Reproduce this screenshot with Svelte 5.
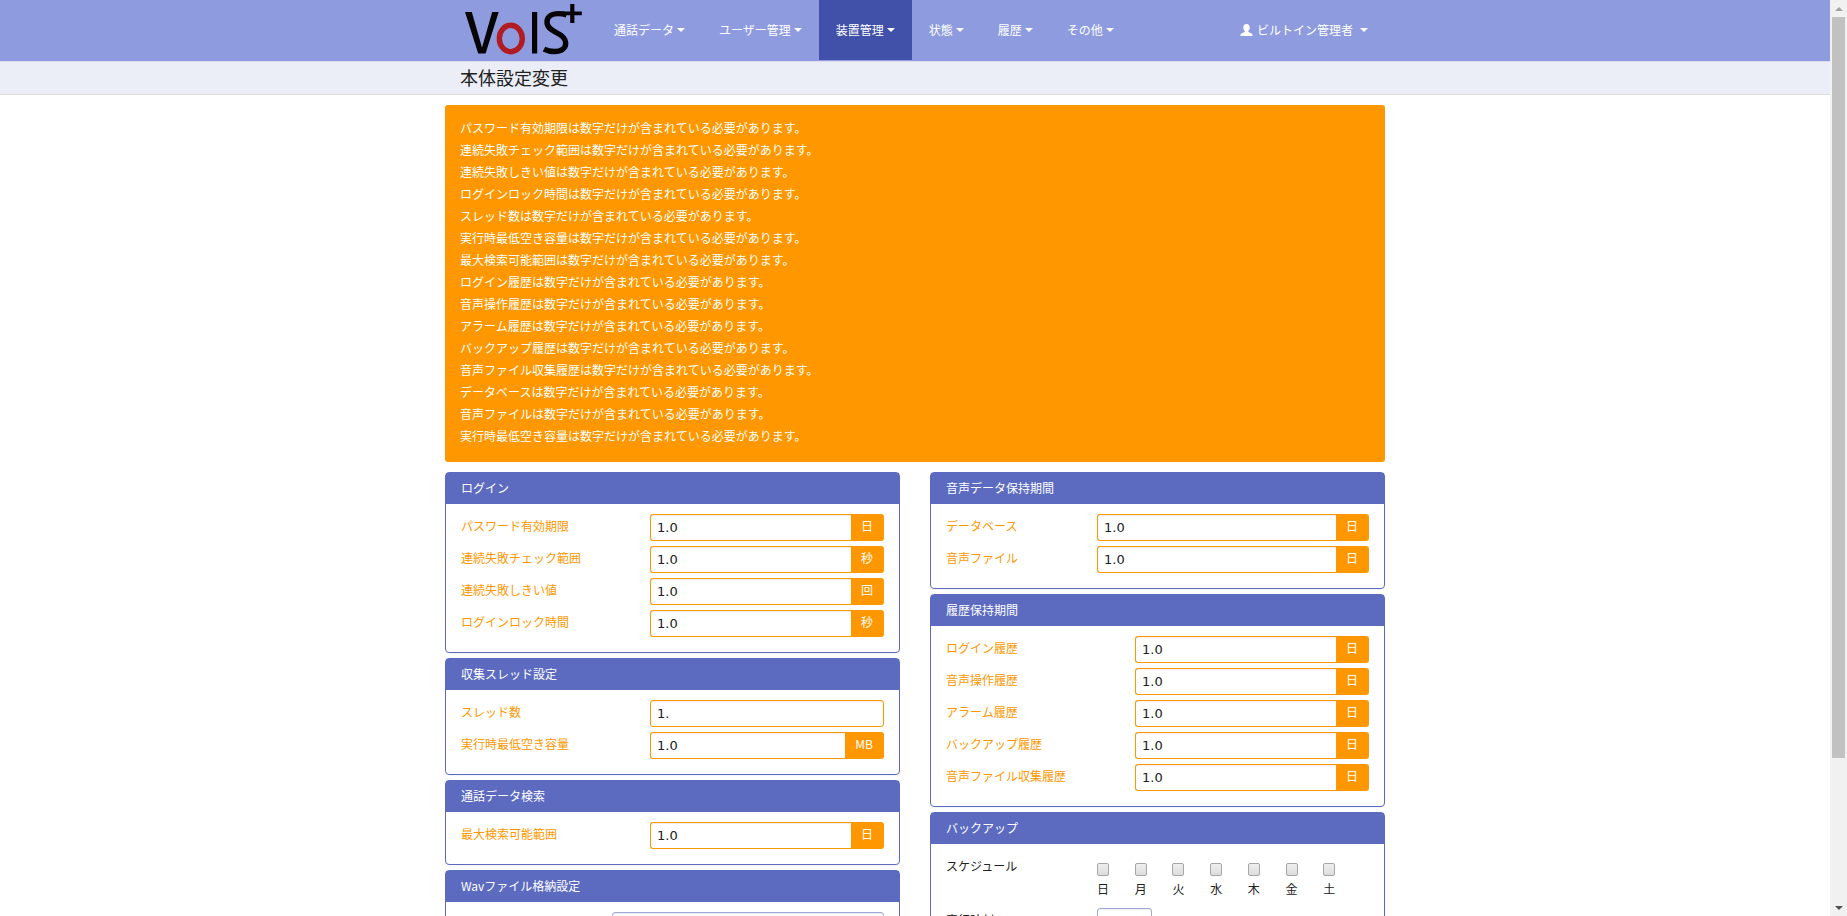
<script>
  const menus = [
    { label: '通話データ' },
    { label: 'ユーザー管理' },
    { label: '装置管理', active: true },
    { label: '状態' },
    { label: '履歴' },
    { label: 'その他' }
  ];

  const invalid = [
    'パスワード有効期限',
    '連続失敗チェック範囲',
    '連続失敗しきい値',
    'ログインロック時間',
    'スレッド数',
    '実行時最低空き容量',
    '最大検索可能範囲',
    'ログイン履歴',
    '音声操作履歴',
    'アラーム履歴',
    'バックアップ履歴',
    '音声ファイル収集履歴',
    'データベース',
    '音声ファイル',
    '実行時最低空き容量'
  ];

  const columns = [
    [
      {
        title: 'ログイン',
        rows: [
          { id: 'expiry', label: 'パスワード有効期限', value: '1.0', unit: '日' },
          { id: 'fail-range', label: '連続失敗チェック範囲', value: '1.0', unit: '秒' },
          { id: 'fail-limit', label: '連続失敗しきい値', value: '1.0', unit: '回' },
          { id: 'lock', label: 'ログインロック時間', value: '1.0', unit: '秒' }
        ]
      },
      {
        title: '収集スレッド設定',
        rows: [
          { id: 'threads', label: 'スレッド数', value: '1.' },
          { id: 'space', label: '実行時最低空き容量', value: '1.0', unit: 'MB' }
        ]
      },
      {
        title: '通話データ検索',
        rows: [{ id: 'search', label: '最大検索可能範囲', value: '1.0', unit: '日' }]
      },
      {
        title: 'Wavファイル格納設定',
        wide: true,
        rows: [{ id: 'wav', label: '', value: '', valid: true }]
      }
    ],
    [
      {
        title: '音声データ保持期間',
        wide: true,
        rows: [
          { id: 'db', label: 'データベース', value: '1.0', unit: '日' },
          { id: 'voice', label: '音声ファイル', value: '1.0', unit: '日' }
        ]
      },
      {
        title: '履歴保持期間',
        rows: [
          { id: 'h-login', label: 'ログイン履歴', value: '1.0', unit: '日' },
          { id: 'h-voice', label: '音声操作履歴', value: '1.0', unit: '日' },
          { id: 'h-alarm', label: 'アラーム履歴', value: '1.0', unit: '日' },
          { id: 'h-backup', label: 'バックアップ履歴', value: '1.0', unit: '日' },
          { id: 'h-collect', label: '音声ファイル収集履歴', value: '1.0', unit: '日' }
        ]
      },
      {
        title: 'バックアップ',
        wide: true,
        rows: [
          { id: 'schedule', label: 'スケジュール', days: ['日', '月', '火', '水', '木', '金', '土'], valid: true },
          { id: 'time', label: '実行時刻', value: '', valid: true, short: true }
        ]
      }
    ]
  ];
</script>

<div class="window">
  <div class="page">
    <header class="navbar">
      <div class="container bar">
        <a class="brand" href="#top" aria-label="VoIS+">
          <svg width="118" height="54" viewBox="0 0 118 54" aria-hidden="true">
            <path d="M0 9h6.800l10.200 35.500L27.200 9h6.500L20.600 50.500h-7.400z" fill="#070405" />
            <ellipse cx="45.800" cy="35.500" rx="11.500" ry="13.200" fill="none" stroke="#b01c22" stroke-width="5.400" />
            <path d="M67 9h5.200v41.500H67z" fill="#070405" />
            <path d="M101.500 11.800C98.500 10.900 96 10.600 93.500 10.600c-7.300 0-11.500 3.400-11.500 8.400 0 5.300 3.700 7.700 9 10.300 6.200 3 9.700 5.700 9.700 10.700 0 5.500-4.500 8.500-11.200 8.500-4 0-7.500-.8-10.500-2.400" fill="none" stroke="#070405" stroke-width="5.400" />
            <path d="M105.200 1h4.200v7.500h7.400v3.700h-7.400V20h-4.200v-7.800h-7.500V8.500h7.500z" fill="#070405" />
          </svg>
        </a>
        <nav class="menus">
          {#each menus as menu}
            <a href="#menu" class="menu" class:active={menu.active}>{menu.label}<span class="caret"></span></a>
          {/each}
        </nav>
        <a href="#user" class="user">
          <svg width="13" height="12" viewBox="0 0 12 12" aria-hidden="true">
            <path d="M6 0c2.200 0 3.200 1.300 3.200 3.300 0 1.600-.6 2.900-1.400 3.700v.9l3.300 1.500c.6.300.9.800.9 1.500V12H0v-1.100c0-.7.300-1.200.9-1.500l3.300-1.500V7C3.400 6.200 2.800 4.900 2.800 3.300 2.800 1.300 3.800 0 6 0z" fill="#fff" />
          </svg>
          <span class="name">ビルトイン管理者</span>
          <span class="caret"></span>
        </a>
      </div>
    </header>

    <div class="titlebar">
      <div class="container"><h1>本体設定変更</h1></div>
    </div>

    <main class="container content">
      <ul class="alert">
        {#each invalid as name}
          <li>{name}は数字だけが含まれている必要があります。</li>
        {/each}
      </ul>

      <form class="columns">
        {#each columns as panels}
          <div class="column">
            {#each panels as panel}
              <section class="panel">
                <h2 id="{panel.rows[0].id}-title">{panel.title}</h2>
                <div class="rows">
                  {#each panel.rows as row}
                    {#if row.days}
                      <div class="row wide valid" role="group" aria-labelledby={row.id}>
                        <span class="label" id={row.id}>{row.label}</span>
                        <div class="days">
                          {#each row.days as day}
                            <label class="day"><input type="checkbox" /><span>{day}</span></label>
                          {/each}
                        </div>
                      </div>
                    {:else}
                      <div class="row" class:wide={panel.wide} class:valid={row.valid}>
                        <label class="label" for={row.id}>{row.label}</label>
                        <div class="group" class:short={row.short}>
                          <input
                            id={row.id}
                            type="text"
                            value={row.value}
                            aria-labelledby={row.label ? undefined : `${row.id}-title`}
                          />
                          {#if row.unit}<span class="unit">{row.unit}</span>{/if}
                        </div>
                      </div>
                    {/if}
                  {/each}
                </div>
              </section>
            {/each}
          </div>
        {/each}
      </form>
    </main>
  </div>

  <div class="scrollbar" aria-hidden="true">
    <span class="arrow up"></span>
    <div class="track"><div class="thumb"></div></div>
    <span class="arrow down"></span>
  </div>
</div>

<style>
  :global(body) {
    margin: 0;
    background: #fff;
    color: #212121;
    font: 12px/22px 'Noto Sans CJK JP', sans-serif;
  }
  .window {
    display: grid;
    grid-template-columns: minmax(0, 1fr) 17px;
    height: 100vh;
    overflow: hidden;
  }
  .page {
    min-width: 0;
    overflow: hidden;
  }
  .container {
    box-sizing: border-box;
    max-width: 970px;
    margin: 0 auto;
    padding: 0 15px;
  }
  .navbar {
    background: #8e9cdf;
    border-bottom: 1px solid #dcdde6;
  }
  .bar {
    display: flex;
    height: 61px;
  }
  .brand {
    width: 118px;
    padding: 3px 14px 0 20px;
  }
  .brand svg {
    display: block;
  }
  .menus {
    display: flex;
    height: 60px;
  }
  .menu,
  .user {
    display: flex;
    align-items: center;
    color: #fff;
    line-height: 58px;
    height: 60px;
    text-decoration: none;
    white-space: nowrap;
  }
  .menu {
    box-sizing: border-box;
    gap: 3px;
    padding: 0 17px;
    align-items: center;
  }
  .menu.active {
    background: #4150a8;
  }
  .user {
    margin-left: auto;
    padding-right: 17px;
  }
  .name {
    padding: 0 7px 0 4px;
  }
  .caret {
    border: 4px solid transparent;
    border-top-color: #fff;
    border-bottom: 0;
  }
  .titlebar {
    background: #ebeef7;
    border-bottom: 1px solid #dedee2;
  }
  h1 {
    margin: 0;
    padding: 0 15px 2px;
    font-size: 18px;
    font-weight: 400;
    line-height: 30px;
  }
  .content {
    padding-top: 10px;
  }
  .alert {
    margin: 0 0 10px;
    padding: 12px 15px 15px;
    list-style: none;
    color: #fff;
    background: #ff9800;
    border-radius: 3px;
  }
  .columns {
    display: grid;
    grid-template-columns: 1fr 1fr;
    gap: 30px;
    align-items: start;
  }
  .column {
    display: grid;
    gap: 5px;
  }
  .panel {
    border: 1px solid #5c6bc0;
    border-radius: 4px;
    box-shadow: 0 1px 1px rgba(0, 0, 0, 0.05);
  }
  h2 {
    margin: 0;
    padding: 0 15px 2px;
    font-size: 12px;
    font-weight: 400;
    line-height: 29px;
    color: #fff;
    background: #5c6bc0;
  }
  .rows {
    display: grid;
    gap: 5px;
    padding: 10px 15px 15px;
  }
  .row {
    display: grid;
    grid-template-columns: 189fr 234fr;
    align-items: start;
    color: #ff9800;
  }
  .row.wide {
    grid-template-columns: 151fr 272fr;
  }
  .row.valid {
    color: #212121;
  }
  .label {
    line-height: 23px;
  }
  .group {
    display: flex;
    height: 27px;
  }
  .group.short {
    width: 55px;
  }
  .group input {
    box-sizing: border-box;
    flex: 1;
    min-width: 0;
    padding: 0 6px;
    font: 13px 'DejaVu Sans', sans-serif;
    color: #212121;
    background: #fff;
    border: 1px solid #ff9800;
    border-radius: 3px;
    box-shadow: inset 0 1px 1px rgba(0, 0, 0, 0.075);
  }
  .valid input[type='text'] {
    border-color: #9fa8da;
  }
  .group input:not(:last-child) {
    border-right: 0;
    border-radius: 3px 0 0 3px;
  }
  .unit {
    padding: 0 11px 0 10px;
    line-height: 23px;
    color: #fff;
    background: #ff9800;
    border-radius: 0 3px 3px 0;
  }
  .days {
    display: grid;
    grid-template-columns: repeat(7, 1fr);
    padding-right: 8px;
  }
  .day {
    display: flex;
    flex-direction: column;
    height: 49px;
    line-height: 22px;
  }
  .day input {
    appearance: none;
    box-sizing: border-box;
    width: 12px;
    height: 13px;
    margin: 9px 0 2px;
    border: 1px solid #a6a6a6;
    border-radius: 2px;
    background: linear-gradient(#eee, #dcdcdc);
  }
  .scrollbar {
    display: flex;
    flex-direction: column;
    align-items: center;
    background: #f1f1f1;
  }
  .arrow {
    flex: none;
    width: 17px;
    height: 17px;
  }
  .arrow::before {
    content: '';
    display: block;
    width: 0;
    margin: 7px auto 0;
    border: 4px solid transparent;
  }
  .arrow.up::before {
    border-top: 0;
    border-bottom-color: #a3a3a3;
  }
  .arrow.down::before {
    border-top-color: #505050;
    border-bottom: 0;
  }
  .track {
    flex: 1;
    width: 13px;
  }
  .thumb {
    height: 84%;
    background: #c1c1c1;
  }
</style>
